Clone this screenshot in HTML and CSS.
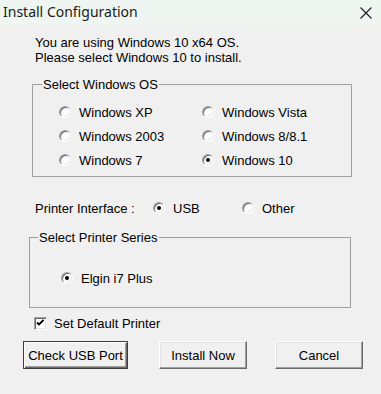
FILE: index.html
```html
<!DOCTYPE html>
<html>
<head>
<meta charset="utf-8">
<link rel="stylesheet" href="styles.css">
</head>
<body>
<div class="window">
  <div class="titlebar">
    <span class="title">Install Configuration</span>
    <svg class="close" width="12" height="12" viewBox="0 0 12 12"><path d="M0.5 0.5 L11.5 11.5 M11.5 0.5 L0.5 11.5" stroke="#1a1a1a" stroke-width="1.1" fill="none"/></svg>
  </div>
  <div class="content">
    <div class="info">
      <div>You are using Windows 10 x64 OS.</div>
      <div>Please select Windows 10 to install.</div>
    </div>

    <fieldset class="group os-group">
      <legend>Select Windows OS</legend>
      <div class="os-grid">
        <div class="opt"><span class="radio"></span><span>Windows XP</span></div>
        <div class="opt"><span class="radio"></span><span>Windows Vista</span></div>
        <div class="opt"><span class="radio"></span><span>Windows 2003</span></div>
        <div class="opt"><span class="radio"></span><span>Windows 8/8.1</span></div>
        <div class="opt"><span class="radio"></span><span>Windows 7</span></div>
        <div class="opt"><span class="radio checked"></span><span>Windows 10</span></div>
      </div>
    </fieldset>

    <div class="iface">
      <span class="iface-label">Printer Interface :</span>
      <div class="opt usb"><span class="radio checked"></span><span>USB</span></div>
      <div class="opt"><span class="radio"></span><span>Other</span></div>
    </div>

    <fieldset class="group printer-group">
      <legend>Select Printer Series</legend>
      <div class="printer-list">
        <div class="opt"><span class="radio checked"></span><span>Elgin i7 Plus</span></div>
      </div>
    </fieldset>

    <div class="check-row">
      <span class="checkbox"><svg width="11" height="11" viewBox="0 0 11 11"><path d="M2 4.5 L4 6.5 L8.5 2" stroke="#000" stroke-width="1.8" fill="none"/></svg></span>
      <span>Set Default Printer</span>
    </div>

    <div class="buttons">
      <button class="btn default wide">Check USB Port</button>
      <button class="btn install">Install Now</button>
      <button class="btn cancel">Cancel</button>
    </div>
  </div>
</div>
</body>
</html>
```
FILE: styles.css
```css
html, body {
  margin: 0;
  padding: 0;
  background: #f0f0f0;
}
.window {
  width: 381px;
  height: 394px;
  background: #f0f0f0;
  font-family: "Liberation Sans", Arial, sans-serif;
  font-size: 13px;
  color: #000;
  overflow: hidden;
}
.titlebar {
  height: 25px;
  background: #eff6f1;
  display: flex;
  align-items: center;
  justify-content: space-between;
  padding: 0 9px 0 3px;
}
.title {
  font-family: "Noto Sans", "Open Sans", sans-serif;
  font-size: 14px;
  color: #1a1a1a;
  margin-top: -2px;
}
.close {
  display: block;
  margin-top: 1px;
}
.content {
  line-height: 15px;
}
.info {
  margin: 10px 0 0 35px;
}
.group {
  box-sizing: border-box;
  border: 1px solid #a0a0a0;
  padding: 0;
  margin: 0;
  min-width: 0;
}
.group legend {
  padding: 0 1px;
  line-height: 15px;
}
.os-group {
  margin: 12px 0 0 32px;
  width: 320px;
}
.os-group legend {
  margin-left: 9px;
}
.os-grid {
  display: grid;
  grid-template-columns: 143px auto;
  grid-auto-rows: 24px;
  padding: 8px 0 4px 26px;
}
.opt {
  display: flex;
  align-items: center;
  gap: 8px;
  height: 24px;
}
.radio {
  position: relative;
  box-sizing: border-box;
  width: 12px;
  height: 12px;
  border-radius: 50%;
  background: #fff;
  border: 1px solid;
  border-color: #a0a0a0 #fff #fff #a0a0a0;
  box-shadow: inset 1px 1px #696969, inset -1px -1px #e3e3e3;
  flex: none;
}
.radio.checked::after {
  content: "";
  position: absolute;
  left: 3px;
  top: 3px;
  width: 4px;
  height: 4px;
  border-radius: 50%;
  background: #000;
}
.iface {
  display: flex;
  align-items: center;
  height: 20px;
  margin: 21px 0 0 35px;
}
.iface .opt {
  height: 20px;
}
.iface-label {
  width: 118px;
}
.usb {
  width: 89px;
}
.printer-group {
  margin: 12px 0 0 29px;
  width: 322px;
}
.printer-group legend {
  margin-left: 8px;
}
.printer-list {
  padding: 23px 0 19px 31px;
}
.printer-list .opt {
  height: 20px;
}
.check-row {
  display: flex;
  align-items: center;
  gap: 7px;
  margin: 8px 0 0 34px;
  height: 15px;
}
.checkbox {
  box-sizing: border-box;
  width: 13px;
  height: 13px;
  background: #fff;
  border: 1px solid;
  border-color: #a0a0a0 #fff #fff #a0a0a0;
  box-shadow: inset 1px 1px #696969, inset -1px -1px #e3e3e3;
  display: flex;
  align-items: center;
  justify-content: center;
}
.checkbox svg {
  display: block;
}
.buttons {
  display: flex;
  margin: 10px 0 0 23px;
}
.btn {
  box-sizing: border-box;
  height: 28px;
  width: 88px;
  padding: 0;
  background: #f0f0f0;
  font-family: "Liberation Sans", Arial, sans-serif;
  font-size: 13px;
  color: #000;
  border: 1px solid;
  border-color: #fff #696969 #696969 #fff;
  box-shadow: inset -1px -1px #a0a0a0, inset 1px 1px #e3e3e3;
  border-radius: 0;
}
.btn.default {
  border: 1px solid #3c3c3c;
  box-shadow: inset 1px 1px #fff, inset -1px -1px #696969, inset -2px -2px #a0a0a0;
}
.wide {
  width: 105px;
}
.install {
  margin-left: 31px;
}
.cancel {
  margin-left: 28px;
}
```
